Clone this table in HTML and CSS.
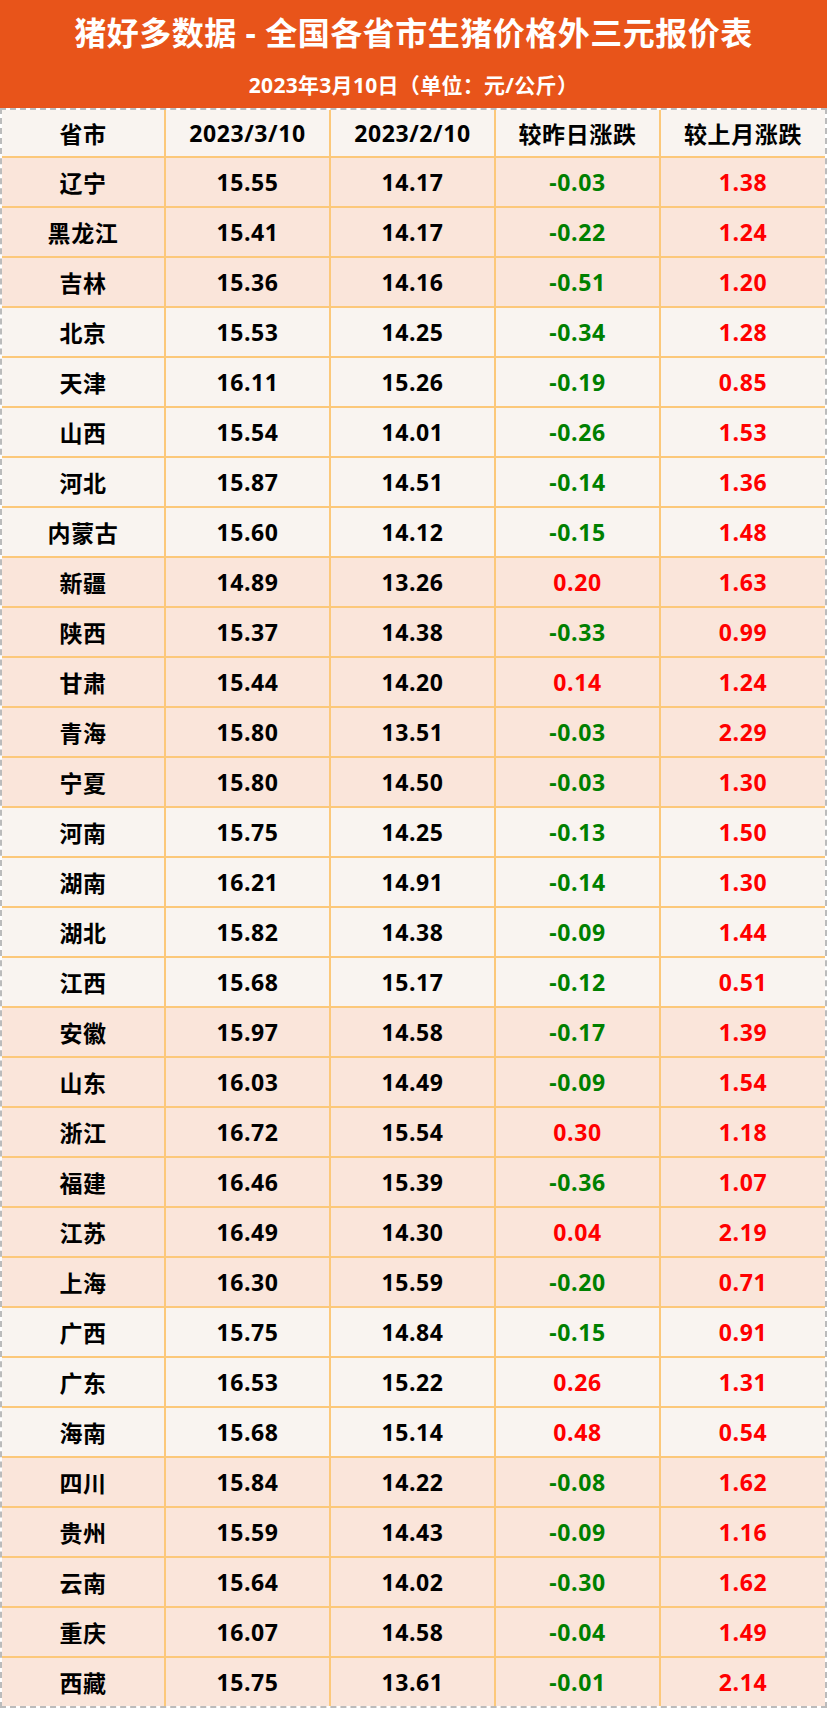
FILE: index.html
```html
<!DOCTYPE html>
<html lang="zh-CN">
<head>
<meta charset="utf-8">
<title>猪好多数据</title>
<link rel="stylesheet" href="styles.css">
</head>
<body>
<div class="page">
  <header class="banner">
    <h1 class="title">猪好多数据 - 全国各省市生猪价格外三元报价表</h1>
    <div class="subtitle">2023年3月10日（单位：元/公斤）</div>
  </header>
  <div class="table">
    <div class="row head"><div class="cell">省市</div><div class="cell">2023/3/10</div><div class="cell">2023/2/10</div><div class="cell">较昨日涨跌</div><div class="cell">较上月涨跌</div></div>
    <div class="row peach"><div class="cell">辽宁</div><div class="cell">15.55</div><div class="cell">14.17</div><div class="cell dn">-0.03</div><div class="cell up">1.38</div></div>
    <div class="row peach"><div class="cell">黑龙江</div><div class="cell">15.41</div><div class="cell">14.17</div><div class="cell dn">-0.22</div><div class="cell up">1.24</div></div>
    <div class="row peach"><div class="cell">吉林</div><div class="cell">15.36</div><div class="cell">14.16</div><div class="cell dn">-0.51</div><div class="cell up">1.20</div></div>
    <div class="row light"><div class="cell">北京</div><div class="cell">15.53</div><div class="cell">14.25</div><div class="cell dn">-0.34</div><div class="cell up">1.28</div></div>
    <div class="row light"><div class="cell">天津</div><div class="cell">16.11</div><div class="cell">15.26</div><div class="cell dn">-0.19</div><div class="cell up">0.85</div></div>
    <div class="row light"><div class="cell">山西</div><div class="cell">15.54</div><div class="cell">14.01</div><div class="cell dn">-0.26</div><div class="cell up">1.53</div></div>
    <div class="row light"><div class="cell">河北</div><div class="cell">15.87</div><div class="cell">14.51</div><div class="cell dn">-0.14</div><div class="cell up">1.36</div></div>
    <div class="row light"><div class="cell">内蒙古</div><div class="cell">15.60</div><div class="cell">14.12</div><div class="cell dn">-0.15</div><div class="cell up">1.48</div></div>
    <div class="row peach"><div class="cell">新疆</div><div class="cell">14.89</div><div class="cell">13.26</div><div class="cell up">0.20</div><div class="cell up">1.63</div></div>
    <div class="row peach"><div class="cell">陕西</div><div class="cell">15.37</div><div class="cell">14.38</div><div class="cell dn">-0.33</div><div class="cell up">0.99</div></div>
    <div class="row peach"><div class="cell">甘肃</div><div class="cell">15.44</div><div class="cell">14.20</div><div class="cell up">0.14</div><div class="cell up">1.24</div></div>
    <div class="row peach"><div class="cell">青海</div><div class="cell">15.80</div><div class="cell">13.51</div><div class="cell dn">-0.03</div><div class="cell up">2.29</div></div>
    <div class="row peach"><div class="cell">宁夏</div><div class="cell">15.80</div><div class="cell">14.50</div><div class="cell dn">-0.03</div><div class="cell up">1.30</div></div>
    <div class="row light"><div class="cell">河南</div><div class="cell">15.75</div><div class="cell">14.25</div><div class="cell dn">-0.13</div><div class="cell up">1.50</div></div>
    <div class="row light"><div class="cell">湖南</div><div class="cell">16.21</div><div class="cell">14.91</div><div class="cell dn">-0.14</div><div class="cell up">1.30</div></div>
    <div class="row light"><div class="cell">湖北</div><div class="cell">15.82</div><div class="cell">14.38</div><div class="cell dn">-0.09</div><div class="cell up">1.44</div></div>
    <div class="row light"><div class="cell">江西</div><div class="cell">15.68</div><div class="cell">15.17</div><div class="cell dn">-0.12</div><div class="cell up">0.51</div></div>
    <div class="row peach"><div class="cell">安徽</div><div class="cell">15.97</div><div class="cell">14.58</div><div class="cell dn">-0.17</div><div class="cell up">1.39</div></div>
    <div class="row peach"><div class="cell">山东</div><div class="cell">16.03</div><div class="cell">14.49</div><div class="cell dn">-0.09</div><div class="cell up">1.54</div></div>
    <div class="row peach"><div class="cell">浙江</div><div class="cell">16.72</div><div class="cell">15.54</div><div class="cell up">0.30</div><div class="cell up">1.18</div></div>
    <div class="row peach"><div class="cell">福建</div><div class="cell">16.46</div><div class="cell">15.39</div><div class="cell dn">-0.36</div><div class="cell up">1.07</div></div>
    <div class="row peach"><div class="cell">江苏</div><div class="cell">16.49</div><div class="cell">14.30</div><div class="cell up">0.04</div><div class="cell up">2.19</div></div>
    <div class="row peach"><div class="cell">上海</div><div class="cell">16.30</div><div class="cell">15.59</div><div class="cell dn">-0.20</div><div class="cell up">0.71</div></div>
    <div class="row light"><div class="cell">广西</div><div class="cell">15.75</div><div class="cell">14.84</div><div class="cell dn">-0.15</div><div class="cell up">0.91</div></div>
    <div class="row light"><div class="cell">广东</div><div class="cell">16.53</div><div class="cell">15.22</div><div class="cell up">0.26</div><div class="cell up">1.31</div></div>
    <div class="row light"><div class="cell">海南</div><div class="cell">15.68</div><div class="cell">15.14</div><div class="cell up">0.48</div><div class="cell up">0.54</div></div>
    <div class="row peach"><div class="cell">四川</div><div class="cell">15.84</div><div class="cell">14.22</div><div class="cell dn">-0.08</div><div class="cell up">1.62</div></div>
    <div class="row peach"><div class="cell">贵州</div><div class="cell">15.59</div><div class="cell">14.43</div><div class="cell dn">-0.09</div><div class="cell up">1.16</div></div>
    <div class="row peach"><div class="cell">云南</div><div class="cell">15.64</div><div class="cell">14.02</div><div class="cell dn">-0.30</div><div class="cell up">1.62</div></div>
    <div class="row peach"><div class="cell">重庆</div><div class="cell">16.07</div><div class="cell">14.58</div><div class="cell dn">-0.04</div><div class="cell up">1.49</div></div>
    <div class="row peach last"><div class="cell">西藏</div><div class="cell">15.75</div><div class="cell">13.61</div><div class="cell dn">-0.01</div><div class="cell up">2.14</div></div>
  </div>
</div>
</body>
</html>
```

FILE: styles.css
```css
* { box-sizing: border-box; }
html, body { margin: 0; padding: 0; background: #ffffff; }
body {
  font-family: "Open Sans", "Noto Sans CJK SC", sans-serif;
  font-weight: 700;
  color: #000;
}
.page { width: 827px; }
.banner {
  background: #e8541a;
  height: 108px;
  color: #ffffff;
  display: flex;
  flex-direction: column;
  align-items: center;
}
.title {
  margin: 0;
  padding-top: 11px;
  height: 71px;
  font-size: 32px;
  line-height: 44px;
  font-weight: 700;
  letter-spacing: 0.5px;
}
.subtitle {
  font-size: 21px;
  line-height: 28px;
  font-weight: 700;
  letter-spacing: 0.3px;
}
.table {
  border-left: 2px dashed #bbbbbb;
  border-right: 2px dashed #bbbbbb;
  border-bottom: 2px dashed #bbbbbb;
  border-top: 2px dashed #bbbbbb;
}
.row {
  display: grid;
  grid-template-columns: 164px 165px 165px 165px 1fr;
  height: 50px;
  border-bottom: 2px solid #fcc87a;
}
.row.head { height: 48px; background: #f9f4f0; }
.row.last { border-bottom: none; height: 48px; }
.row.peach { background: #fae5da; }
.row.light { background: #f9f4f0; }
.cell {
  display: flex;
  align-items: center;
  justify-content: center;
  border-right: 2px solid #fcc87a;
  font-size: 23px;
  letter-spacing: 0.6px;
}
.cell:last-child { border-right: none; }
.up { color: #ff0000; }
.dn { color: #008000; }
```
